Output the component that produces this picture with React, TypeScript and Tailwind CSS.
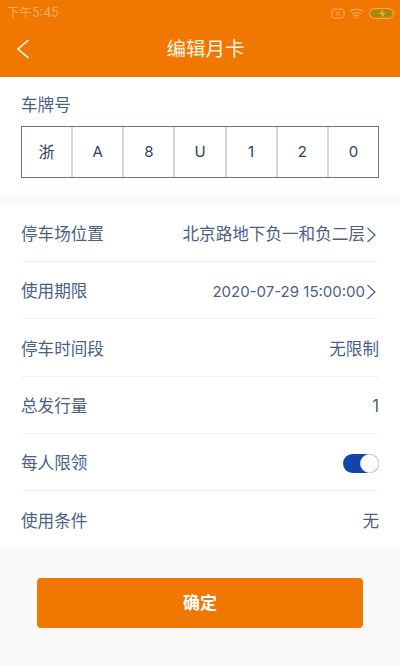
const FONT = "font-['Inter','Noto_Sans_CJK_SC',sans-serif]";

function Chevron() {
  return (
    <svg width="11" height="16" viewBox="0 0 11 16" fill="none" className="ml-px mr-[2px]">
      <path d="M1.5 1 L9 8 L1.5 15" stroke="#4a5f85" strokeWidth="1.2" />
    </svg>
  );
}

function Row({ label, value, chevron, last, small, children }: { label: string; value?: string; chevron?: boolean; last?: boolean; small?: boolean; children?: React.ReactNode }) {
  return (
    <div className={`h-[57.2px] pt-[3px] flex items-center justify-between text-[16.6px] text-[#4a5f85] ${last ? "" : "border-b border-[#f2f2f2]"}`}>
      <span>{label}</span>
      {children ?? (
        <span className={`flex items-center ${small ? "text-[15px]" : ""}`}>
          {value}
          {chevron && <Chevron />}
        </span>
      )}
    </div>
  );
}

export default function App() {
  const plate = ["浙", "A", "8", "U", "1", "2", "0"];
  return (
    <div className={`w-[400px] h-[666px] bg-[#fafafa] overflow-hidden flex flex-col ${FONT}`}>
      <div className="h-[77px] bg-[#f07700] text-white relative shrink-0">
        <div className="h-[26px] pl-[7px] pr-[6px] flex items-center justify-between text-[12.5px] text-[#f9ad66]">
          <span>下午5:45</span>
          <span className="flex items-center gap-[4px]">
            <svg width="14" height="11" viewBox="0 0 14 11" fill="none">
              <rect x="1" y="1" width="12" height="9" rx="2" stroke="#f9ad66" />
              <path d="M5 3.5 L9 7.5 M9 3.5 L5 7.5" stroke="#f9ad66" />
            </svg>
            <svg width="15" height="11" viewBox="0 0 15 11" fill="none">
              <path d="M1 3.5 C4.5 0.5 10.5 0.5 14 3.5 M3 6 C5.5 4 9.5 4 12 6 M5 8 C6.5 7 8.5 7 10 8" stroke="#f9ad66" strokeWidth="1.2" />
              <circle cx="7.5" cy="9.7" r="1" fill="#f9ad66" />
            </svg>
            <svg width="25" height="11" viewBox="0 0 25 11" fill="none" className="ml-[1px]">
              <rect x="0.5" y="0.5" width="24" height="10" rx="5" stroke="#f9ad66" />
              <rect x="2" y="2" width="21" height="7" rx="3.5" fill="#9c8f10" />
              <path d="M15 0.5 L10 6 H13 L11.5 10.5 L16.5 5 H13.5 Z" fill="#f9c060" stroke="#f07700" strokeWidth="0.6" />
            </svg>
          </span>
        </div>
        <div className="h-[48px] pl-[11px] flex items-center justify-center relative">
          <span className="text-[19.5px] text-[#fff3e6]">编辑月卡</span>
          <svg width="14" height="20" viewBox="0 0 14 20" fill="none" className="absolute left-[16px] top-[13px]">
            <path d="M12.5 1 L2 10 L12.5 19" stroke="white" strokeWidth="1.6" />
          </svg>
        </div>
      </div>

      <div className="bg-white h-[118px] px-[21px] pt-[17px] shrink-0">
        <div className="text-[16.6px] leading-[22px] text-[#4a5f85]">车牌号</div>
        <div className="mt-[10px] h-[52px] w-[358px] flex border border-[#5f7298]">
          {plate.map((c, i) => (
            <div key={c} className={`flex-1 flex items-center justify-center text-[#2f3f60] ${i ? "text-[15px] border-l-2 border-[#d4d6da]" : "text-[16px]"}`}>
              {c}
            </div>
          ))}
        </div>
      </div>

      <div className="mt-[10px] bg-white px-[21px] shrink-0">
        <Row label="停车场位置" value="北京路地下负一和负二层" chevron />
        <Row label="使用期限" value="2020-07-29 15:00:00" chevron small />
        <Row label="停车时间段" value="无限制" />
        <Row label="总发行量" value="1" />
        <Row label="每人限领">
          <span className="w-[36px] h-[19px] rounded-full bg-[#0f46a8] relative">
            <span className="absolute right-0 top-0 w-[19px] h-[19px] rounded-full bg-white border border-[#e8ecf4]" />
          </span>
        </Row>
        <Row label="使用条件" value="无" last />
      </div>

      <div className="mt-[30px] mx-[37px] h-[50px] pt-[2px] rounded-[4px] bg-[#f07700] flex items-center justify-center text-white text-[17px] font-bold">
        确定
      </div>
    </div>
  );
}
